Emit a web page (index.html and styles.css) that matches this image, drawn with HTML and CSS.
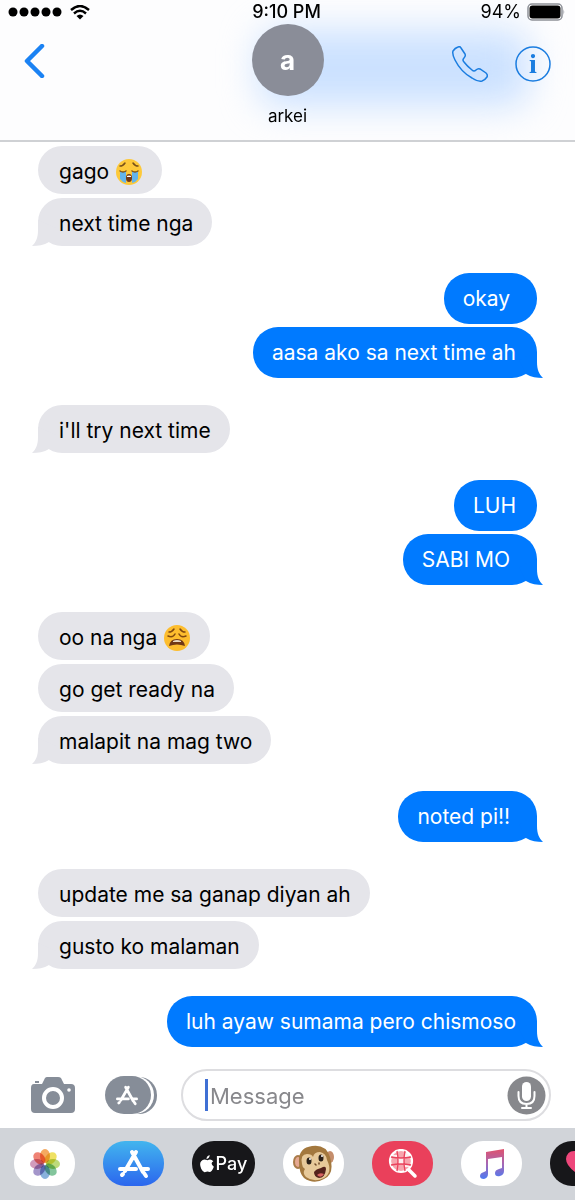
FILE: index.html
```html
<!DOCTYPE html>
<html lang="tl">
<head>
    <meta charset="UTF-8">
    <meta name="viewport" content="width=device-width, initial-scale=1.0">
    <title>arkei</title>
    <link rel="stylesheet" href="styles.css">
</head>
<body>
    <!-- Shared shapes -->
    <svg class="defs" aria-hidden="true">
        <symbol id="tail-in" viewBox="0 0 24 26">
            <path d="M6 0V10C6 18 4 22 0 26C6 26 12 25 17 22L24 8Z"/>
        </symbol>
        <symbol id="tail-out" viewBox="0 0 24 26">
            <path d="M18 0V10C18 18 20 22 24 26C18 26 12 25 7 22L0 8Z"/>
        </symbol>
        <symbol id="app-a" viewBox="0 0 32 30">
            <g fill="none" stroke="#fff" stroke-width="4" stroke-linecap="round">
                <path d="M18 3L7 22M14 3L25 23M2 20H18M25 20H30M4 26L5 25M26 24L28 27"/>
            </g>
        </symbol>
    </svg>

    <header class="header">
        <div class="status">
            <div class="status-left">
                <svg width="54" height="10" viewBox="0 0 54 10" aria-label="Signal">
                    <circle cx="5" cy="5" r="4.5"/><circle cx="16" cy="5" r="4.5"/><circle cx="27" cy="5" r="4.5"/><circle cx="38" cy="5" r="4.5"/><circle cx="49" cy="5" r="4.5"/>
                </svg>
                <svg width="20" height="15" viewBox="0 0 20 15" aria-label="Wi-Fi">
                    <path d="M1 5Q10 -3 19 5M4 8.500Q10 3 16 8.500" fill="none" stroke="#000" stroke-width="2.400"/>
                    <path d="M6.500 11Q10 8 13.500 11L10 14.500Z"/>
                </svg>
            </div>
            <time class="clock">9:10 PM</time>
            <div class="status-right">
                <span>94%</span>
                <svg width="38" height="18" viewBox="0 0 38 18" aria-label="Battery">
                    <rect x="1" y="1" width="34" height="16" rx="4" fill="#fff" stroke="#8d9097" stroke-width="1.500"/>
                    <rect x="2.500" y="2.500" width="31" height="13" rx="3"/>
                    <path d="M36.500 6Q38 9 36.500 12Z" fill="#8d9097"/>
                </svg>
            </div>
        </div>
        <div class="nav">
            <button class="icon-btn" aria-label="Back">
                <svg width="22" height="34" viewBox="0 0 22 34"><path d="M18 2L3 17L18 32" fill="none" stroke="#1b82f3" stroke-width="4.500" stroke-linecap="round" stroke-linejoin="round"/></svg>
            </button>
            <div class="contact">
                <div class="avatar">a</div>
                <div class="name">arkei</div>
            </div>
            <div class="actions">
                <button class="icon-btn" aria-label="Call">
                    <svg width="36" height="36" viewBox="0 0 36 36"><path d="M1 5Q3 2 6 1Q8 0 9 2L13 8Q14 10 12 12Q10 14 12 16Q15 20 20 24Q22 26 24 24Q26 22 28 23L34 27Q36 29 35 31Q33 34 30 35Q26 36 20 32Q9 26 3 14Q0 8 1 5Z" fill="none" stroke="#1b7de0" stroke-width="1.500"/></svg>
                </button>
                <button class="icon-btn" aria-label="Info">
                    <svg width="36" height="36" viewBox="0 0 36 36"><circle cx="18" cy="18" r="17" fill="none" stroke="#1b7de0" stroke-width="1.500"/><text x="18" y="27" text-anchor="middle" class="info-i">i</text></svg>
                </button>
            </div>
        </div>
    </header>

    <main class="chat">
        <div class="group in">
            <p class="bubble">gago
                <svg class="emoji" viewBox="0 0 28 28" aria-label="crying face">
                    <circle cx="14" cy="14" r="13" fill="#fdc93a"/>
                    <path d="M5 14h6v11q-4-1-6-4zM17 14h6v7q-2 3-6 4z" fill="#63b4ea"/>
                    <path d="M5 8q3 0 5-3M23 8q-3 0-5-3M5 13q3 2 6 0M17 13q3 2 6 0" fill="none" stroke="#78501b" stroke-width="1.500" stroke-linecap="round"/>
                    <path d="M11 20q0-4 3-4t3 4q0 4-3 4t-3-4" fill="#713816"/>
                    <path d="M12 18q2-1 4 0v1h-4z" fill="#fff"/>
                </svg>
            </p>
            <p class="bubble">next time nga<svg class="tail"><use href="#tail-in"/></svg></p>
        </div>
        <div class="group out">
            <p class="bubble">okay&nbsp;</p>
            <p class="bubble">aasa ako sa next time ah<svg class="tail"><use href="#tail-out"/></svg></p>
        </div>
        <div class="group in">
            <p class="bubble">i'll try next time<svg class="tail"><use href="#tail-in"/></svg></p>
        </div>
        <div class="group out">
            <p class="bubble">LUH</p>
            <p class="bubble">SABI MO&nbsp;<svg class="tail"><use href="#tail-out"/></svg></p>
        </div>
        <div class="group in">
            <p class="bubble">oo na nga
                <svg class="emoji" viewBox="0 0 28 28" aria-label="weary face">
                    <circle cx="14" cy="14" r="13" fill="#fdbd2e"/>
                    <path d="M6 8q3 0 5-3M22 8q-3 0-5-3M5 12q5 2 7-2M23 12q-5 2-7-2" fill="none" stroke="#80480f" stroke-width="1.500" stroke-linecap="round"/>
                    <path d="M6 22q1-7 8-7t8 7q-8-3-16 0" fill="#713816"/>
                    <path d="M10 17q4-2 8 0v1h-8z" fill="#e8d9c4"/>
                </svg>
            </p>
            <p class="bubble">go get ready na</p>
            <p class="bubble">malapit na mag two<svg class="tail"><use href="#tail-in"/></svg></p>
        </div>
        <div class="group out">
            <p class="bubble">noted pi!!&nbsp;<svg class="tail"><use href="#tail-out"/></svg></p>
        </div>
        <div class="group in">
            <p class="bubble">update me sa ganap diyan ah</p>
            <p class="bubble">gusto ko malaman<svg class="tail"><use href="#tail-in"/></svg></p>
        </div>
        <div class="group out">
            <p class="bubble">luh ayaw sumama pero chismoso<svg class="tail"><use href="#tail-out"/></svg></p>
        </div>
    </main>

    <form class="composer">
        <button type="button" class="icon-btn" aria-label="Camera">
            <svg width="44" height="38" viewBox="0 0 44 38">
                <path d="M3 8H11L14 2Q15 1 16 1H27Q29 1 30 2L33 8H40Q44 8 44 12V33Q44 37 40 37H4Q0 37 0 33V12Q0 8 3 8Z" fill="#868d98"/>
                <path d="M4 6h4" stroke="#868d98" stroke-width="2"/>
                <circle cx="22" cy="22" r="9" fill="none" stroke="#fff" stroke-width="4"/>
                <circle cx="38" cy="14" r="1.800" fill="#fff"/>
            </svg>
        </button>
        <button type="button" class="icon-btn" aria-label="Apps">
            <svg width="52" height="38" viewBox="0 0 52 38">
                <rect x="12" y="1" width="40" height="37" rx="18" fill="#868d98"/>
                <rect x="0" y="0" width="49" height="38" rx="19" fill="#fff"/>
                <rect x="0" y="0" width="46" height="38" rx="19" fill="#868d98"/>
                <use href="#app-a" x="11" y="9" width="22" height="21"/>
            </svg>
        </button>
        <div class="field">
            <span class="cursor"></span>
            <input type="text" placeholder="Message" aria-label="Message">
            <button type="button" class="icon-btn" aria-label="Dictate">
                <svg width="39" height="39" viewBox="0 0 39 39">
                    <circle cx="19.500" cy="19.500" r="19" fill="#87888c"/>
                    <rect x="15" y="6" width="9" height="19" rx="4.500" fill="#fff"/>
                    <path d="M11.500 16V20Q11.500 28 19.500 28T27.500 20V16M19.500 28V32M15 32H24" fill="none" stroke="#fff" stroke-width="2" stroke-linecap="round"/>
                </svg>
            </button>
        </div>
    </form>

    <nav class="apps">
        <button class="app photos" aria-label="Photos">
            <svg width="32" height="32" viewBox="0 0 32 32">
                <g class="petals">
                    <ellipse cx="16" cy="8" rx="5" ry="7" fill="#f4a04f"/>
                    <ellipse cx="16" cy="8" rx="5" ry="7" fill="#eede52" transform="rotate(45 16 16)"/>
                    <ellipse cx="16" cy="8" rx="5" ry="7" fill="#b6d66c" transform="rotate(90 16 16)"/>
                    <ellipse cx="16" cy="8" rx="5" ry="7" fill="#75bf91" transform="rotate(135 16 16)"/>
                    <ellipse cx="16" cy="8" rx="5" ry="7" fill="#7ba9d8" transform="rotate(180 16 16)"/>
                    <ellipse cx="16" cy="8" rx="5" ry="7" fill="#9a8bc5" transform="rotate(225 16 16)"/>
                    <ellipse cx="16" cy="8" rx="5" ry="7" fill="#cd90b5" transform="rotate(270 16 16)"/>
                    <ellipse cx="16" cy="8" rx="5" ry="7" fill="#ee7566" transform="rotate(315 16 16)"/>
                </g>
            </svg>
        </button>
        <button class="app store" aria-label="App Store">
            <svg width="32" height="30"><use href="#app-a"/></svg>
        </button>
        <button class="app pay">
            <svg width="14" height="18" viewBox="0 0 13 17">
                <path d="M9 0Q9 3 6 4Q6 1 9 0ZM7 5Q10 3 12.500 6Q9 8 13 11Q11 16 9 16Q7 15 5 16Q3 17 1 13Q-1 8 1 6Q3 3 7 5Z" fill="#fff"/>
            </svg>
            Pay
        </button>
        <button class="app" aria-label="Animoji">
            <svg width="44" height="40" viewBox="0 0 44 40">
                <ellipse cx="6" cy="18" rx="5" ry="7" fill="#a97b49"/>
                <ellipse cx="6" cy="18" rx="3" ry="5" fill="#e5a892"/>
                <ellipse cx="38" cy="13" rx="4" ry="6" fill="#c58e6c"/>
                <path d="M7 18Q6 4 20 2Q34 0 38 13Q43 30 32 35Q22 41 12 34Q7 29 7 18Z" fill="#a3783e"/>
                <path d="M10 20Q8 10 15 10Q20 10 21 13Q22 8 28 8Q34 9 35 16Q41 28 32 34Q22 39 14 33Q10 29 13 25Q10 23 10 20Z" fill="#e7c99a"/>
                <ellipse cx="17" cy="17" rx="2.500" ry="3.500" fill="#2a2019"/>
                <ellipse cx="29" cy="14" rx="2.500" ry="3.500" fill="#2a2019"/>
                <circle cx="18" cy="15" r="1" fill="#fff"/><circle cx="30" cy="12" r="1" fill="#fff"/>
                <path d="M23 20l1 1M27 19v1" stroke="#714a28" stroke-width="1.500" stroke-linecap="round"/>
                <path d="M22 28Q24 25 29 24Q34 21 34 25Q33 34 27 34Q22 33 22 28Z" fill="#54221c"/>
                <path d="M25 31Q28 28 32 30Q29 35 25 31Z" fill="#d76361"/>
            </svg>
        </button>
        <button class="app search" aria-label="Image search">
            <svg width="30" height="30" viewBox="0 0 30 30">
                <circle cx="13" cy="12" r="11" fill="#f7a5ae" stroke="#fff" stroke-width="2.200"/>
                <path d="M10 9h6v6h-6zM5 6h5v3H5zM16 15h5v3h-5zM16 4h5v5h-5z" fill="#fff" opacity=".8"/>
                <path d="M3 8Q13 10 23 8M3 16Q13 14 23 16M9 2Q11 12 9 22M17 2Q15 12 17 22" fill="none" stroke="#e9425c" stroke-width="1.300"/>
                <path d="M21 21L27 27" stroke="#fff" stroke-width="3.500" stroke-linecap="round"/>
            </svg>
        </button>
        <button class="app" aria-label="Music">
            <svg width="26" height="32" viewBox="0 0 26 32">
                <defs>
                    <linearGradient id="note" x1="0" y1="0" x2="0" y2="1">
                        <stop offset="0" stop-color="#e0526d"/><stop offset=".5" stop-color="#a568b5"/><stop offset="1" stop-color="#4d79f2"/>
                    </linearGradient>
                </defs>
                <path d="M7 4L25 1V23Q25 27 21 28Q16 29 16 25Q16 22 20 21L23 20V9L9 11V26Q9 30 5 31Q1 31 1 28Q1 25 5 24L7 23Z" fill="url(#note)"/>
            </svg>
        </button>
        <button class="app touch" aria-label="Digital Touch">
            <svg width="30" height="26" viewBox="0 0 30 26">
                <path d="M15 25Q0 16 0 8Q1 0 8 0Q13 0 15 5Q17 0 22 0Q29 0 30 8Q30 16 15 25Z" fill="#ee477b"/>
            </svg>
        </button>
    </nav>
</body>
</html>
```

FILE: styles.css
```css
:root {
    --blue: #007aff;
    --gray-bubble: #e5e5ea;
    --font: Inter, "Liberation Sans", sans-serif;
}

* {
    box-sizing: border-box;
}

body {
    margin: 0;
    min-height: 100vh;
    display: flex;
    flex-direction: column;
    background: #fff;
    color: #000;
    font-family: var(--font);
}

button {
    border: none;
    padding: 0;
    font-family: inherit;
    cursor: pointer;
}
.icon-btn {
    background: none;
    display: flex;
}
.defs {
    position: absolute;
    width: 0;
    height: 0;
}

/* Header */
.header {
    position: relative;
    overflow: hidden;
    background: #fdfdfe;
    border-bottom: 2px solid #cfd1d4;
    padding-bottom: 14px;
}
/* blue bubble showing through the translucent bar */
.header::before {
    content: "";
    position: absolute;
    top: 30px;
    left: 45%;
    right: 8%;
    height: 76px;
    border-radius: 20px;
    background: #cbe1ff;
    filter: blur(18px);
}
.status {
    position: relative;
    display: grid;
    grid-template-columns: 1fr auto 1fr;
    align-items: center;
    height: 24px;
    padding: 0 10px 0 8px;
    font-size: 18px;
    line-height: 22px;
}
.status-left, .status-right {
    display: flex;
    align-items: center;
    gap: 8px;
}
.status-right {
    justify-content: flex-end;
    gap: 6px;
}
.clock {
    font-weight: 500;
}
.nav {
    position: relative;
    display: grid;
    grid-template-columns: 1fr auto 1fr;
    align-items: start;
    padding: 0 24px;
}
.nav > .icon-btn {
    justify-self: start;
    padding-top: 20px;
}
.contact {
    text-align: center;
}
.avatar {
    width: 72px;
    height: 72px;
    border-radius: 50%;
    background: #8a8d98;
    color: #fff;
    font-size: 26px;
    font-weight: 700;
    line-height: 74px;
}
.name {
    margin-top: 10px;
    font-size: 17px;
    line-height: 20px;
}
.actions {
    display: flex;
    justify-content: flex-end;
    gap: 27px;
    padding-top: 22px;
}
.info-i {
    font: bold 28px "Liberation Serif", serif;
    fill: #1b7de0;
}

/* Messages */
.chat {
    flex: 1;
    display: flex;
    flex-direction: column;
    gap: 27px;
    padding: 4px 38px 12px;
}
.group {
    display: flex;
    flex-direction: column;
    align-items: flex-start;
    gap: 4px;
}
.group.out {
    align-items: flex-end;
    gap: 3px;
}
.bubble {
    position: relative;
    margin: 0;
    padding: 12px 19px 8px 21px;
    border-radius: 25px;
    background: var(--gray-bubble);
    font-size: 21px;
    line-height: 28px;
}
.out .bubble {
    padding: 12px 21px 11px 19px;
    background: var(--blue);
    color: #fff;
}
.emoji {
    width: 28px;
    height: 28px;
    vertical-align: top;
}
.tail {
    position: absolute;
    bottom: 0;
    left: -6px;
    width: 24px;
    height: 26px;
    fill: var(--gray-bubble);
}
.out .tail {
    left: auto;
    right: -6px;
    fill: var(--blue);
}

/* Composer */
.composer {
    display: flex;
    align-items: center;
    gap: 30px;
    padding: 9px 24px 7px 31px;
}
.field {
    flex: 1;
    min-width: 0;
    display: flex;
    align-items: center;
    height: 52px;
    margin-left: -6px;
    padding: 0 3px 0 22px;
    border: 2px solid #dddde0;
    border-radius: 26px;
}
.cursor {
    width: 3px;
    height: 32px;
    background: #3f70d4;
}
.field input {
    flex: 1;
    min-width: 0;
    border: none;
    outline: none;
    background: none;
    padding: 2px 0 0 2px;
    font-family: inherit;
    font-size: 22px;
}
.field input::placeholder {
    color: #88888c;
    opacity: 1;
}

/* App strip */
.apps {
    display: flex;
    gap: 28px;
    padding: 13px 0 14px 14px;
    background: #d1d4d9;
    overflow: hidden;
}
.app {
    flex: none;
    display: flex;
    align-items: center;
    justify-content: center;
    gap: 2px;
    width: 61px;
    height: 45px;
    border-radius: 22px;
    background: #fff;
}
.petals ellipse {
    mix-blend-mode: multiply;
    opacity: 0.9;
}
.store {
    background: linear-gradient(#42b5ee, #2b66ee);
}
.pay {
    width: 63px;
    background: #17171a;
    color: #fff;
    font-size: 18px;
    font-weight: 500;
}
.search {
    background: #ea405b;
}
.touch {
    background: #17171a;
}
```
